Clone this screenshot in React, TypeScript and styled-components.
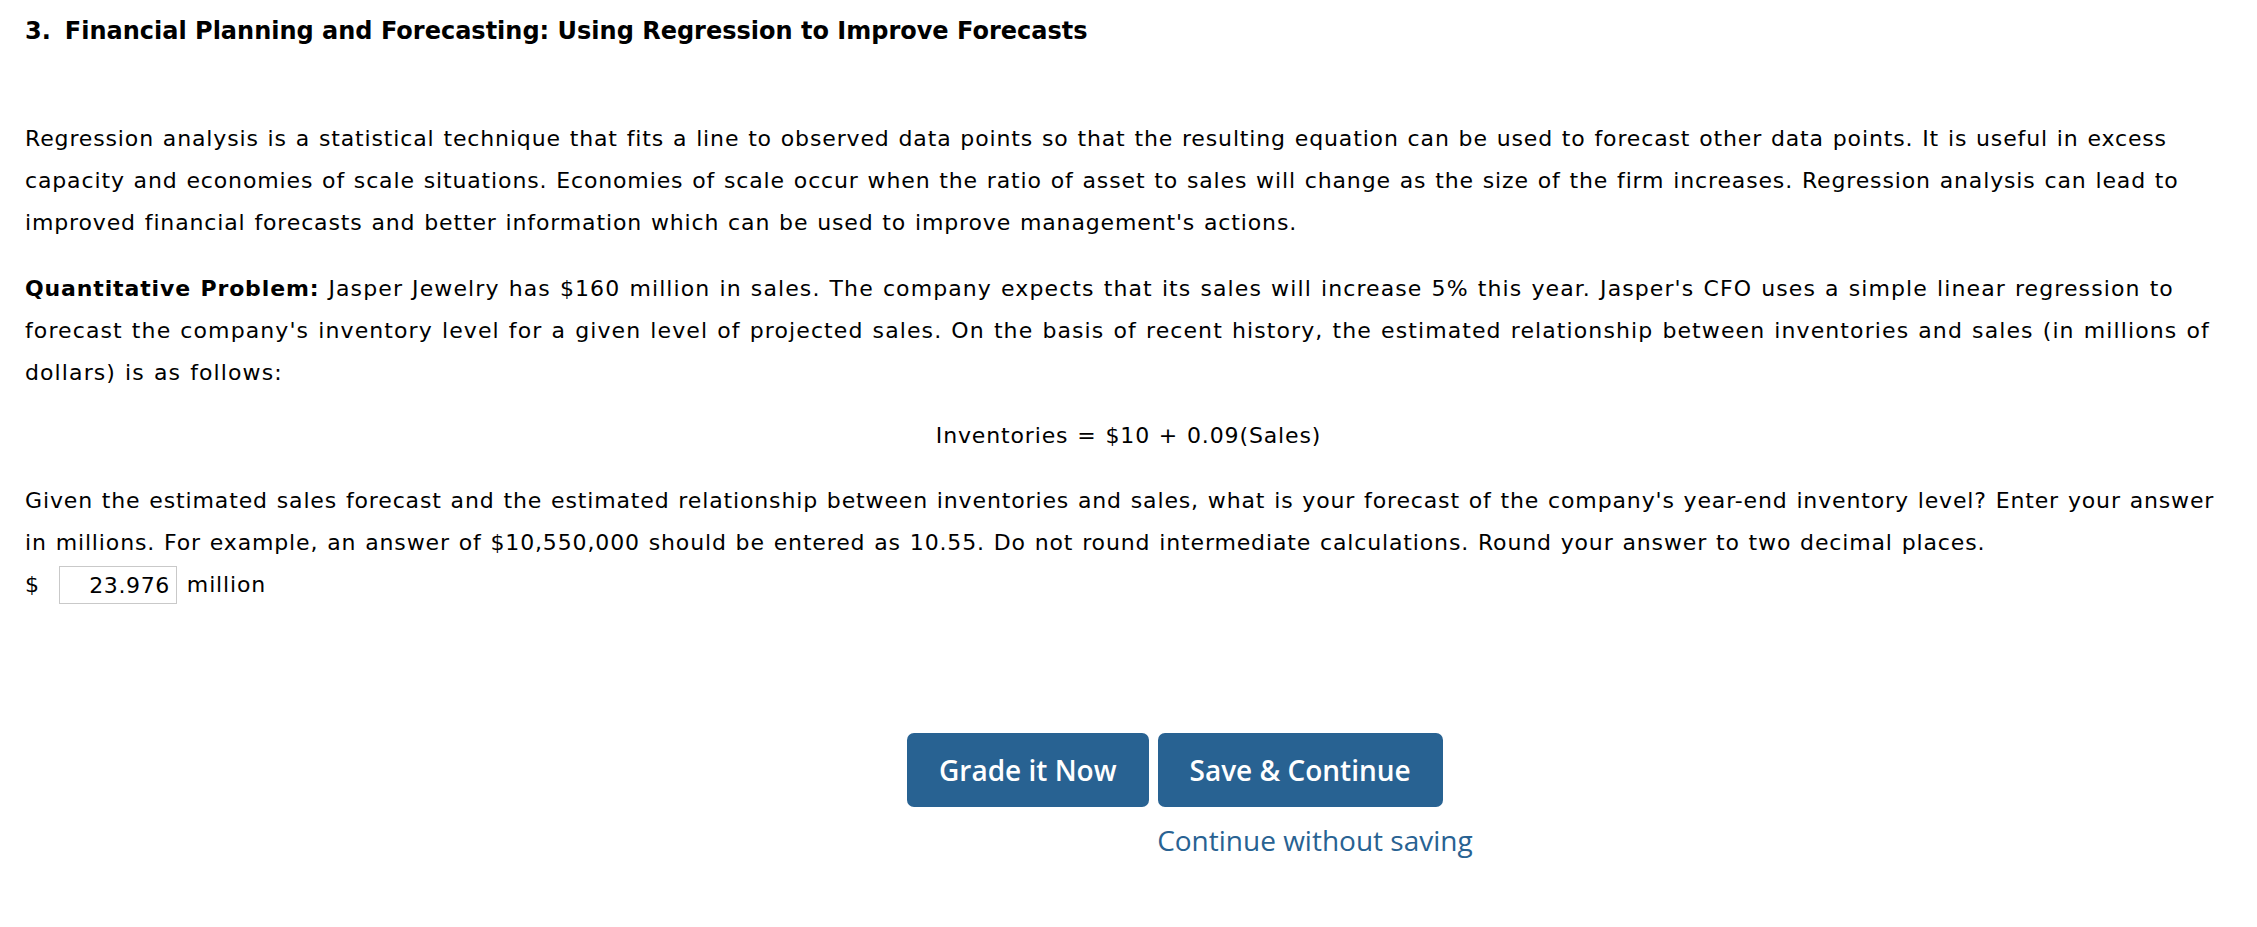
import { createGlobalStyle } from 'styled-components'
import styled from 'styled-components'

const GlobalStyle = createGlobalStyle`
  html, body {
    margin: 0;
    padding: 0;
    background: #fff;
  }
  body {
    font-family: 'DejaVu Sans', Verdana, sans-serif;
    color: #000;
  }
`

export default function App() {
  return (
    <>
      <GlobalStyle />
      <Page>
        <Title>
          <Num>3.</Num>Financial Planning and Forecasting: Using Regression to Improve Forecasts
        </Title>

        <Para>
          Regression analysis is a statistical technique that fits a line to observed data points so that the resulting
          equation can be used to forecast other data points. It is useful in excess capacity and economies of scale
          situations. Economies of scale occur when the ratio of asset to sales will change as the size of the firm
          increases. Regression analysis can lead to improved financial forecasts and better information which can be
          used to improve management's actions.
        </Para>

        <Para $spacing={1.1}>
          <b>Quantitative Problem:</b> Jasper Jewelry has $160 million in sales. The company expects that its sales will
          increase 5% this year. Jasper's CFO uses a simple linear regression to forecast the company's inventory level
          for a given level of projected sales. On the basis of recent history, the estimated relationship between
          inventories and sales (in millions of dollars) is as follows:
        </Para>

        <Equation>Inventories = $10 + 0.09(Sales)</Equation>

        <Para $tight>
          Given the estimated sales forecast and the estimated relationship between inventories and sales, what is your
          forecast of the company's year-end inventory level? Enter your answer in millions. For example, an answer of
          $10,550,000 should be entered as 10.55. Do not round intermediate calculations. Round your answer to two
          decimal places.
        </Para>

        <AnswerRow>
          <span>$</span>
          <AnswerInput type="text" defaultValue="23.976" />
          <span>million</span>
        </AnswerRow>

        <Actions>
          <ButtonRow>
            <ActionButton type="button">Grade it Now</ActionButton>
            <ActionButton type="button">Save &amp; Continue</ActionButton>
          </ButtonRow>
          <SkipLink href="#">Continue without saving</SkipLink>
        </Actions>
      </Page>
    </>
  )
}

const Page = styled.div`
  padding: 10px 20px 0 25px;
  font-size: 22px;
  letter-spacing: 0.86px;
  word-spacing: 1px;
  line-height: 42px;
`

const Title = styled.h2`
  font-size: 24px;
  font-weight: bold;
  letter-spacing: 0;
  word-spacing: 0;
  line-height: 42px;
  margin: 0 0 66px 0;
`

const Num = styled.span`
  margin-right: 14px;
`

const Para = styled.p<{ $tight?: boolean; $spacing?: number }>`
  margin: 0 0 ${(p) => (p.$tight ? '0' : '24px')} 0;
  letter-spacing: ${(p) => (p.$spacing ? `${p.$spacing}px` : '0.86px')};

  b {
    letter-spacing: 0.86px;
  }
`

const Equation = styled.div`
  text-align: center;
  margin: -3px 5px 23px 0;
`

const AnswerRow = styled.div`
  display: flex;
  align-items: center;
  height: 42px;
`

const AnswerInput = styled.input`
  box-sizing: border-box;
  width: 118px;
  height: 38px;
  margin: 0 10px 0 19px;
  padding: 0 6px;
  border: 1px solid #c9c9c9;
  font-family: 'DejaVu Sans', Verdana, sans-serif;
  font-size: 22px;
  letter-spacing: 0.6px;
  text-align: right;
  color: #000;
  outline: none;
`

const Actions = styled.div`
  display: grid;
  grid-template-columns: auto;
  justify-content: start;
  margin: 127px 0 0 882px;
  letter-spacing: 0;
  word-spacing: 0;
`

const ButtonRow = styled.div`
  display: flex;
  gap: 9px;
`

const ActionButton = styled.button`
  height: 74px;
  padding: 0 32px;
  border: none;
  border-radius: 7px;
  background: #286292;
  color: #fff;
  font-family: 'Open Sans', sans-serif;
  font-weight: 600;
  font-size: 28px;
  cursor: pointer;
`

const SkipLink = styled.a`
  justify-self: end;
  margin: 14px -30px 0 0;
  font-family: 'Open Sans', sans-serif;
  font-size: 28px;
  line-height: 38px;
  color: #286292;
  text-decoration: none;
`
